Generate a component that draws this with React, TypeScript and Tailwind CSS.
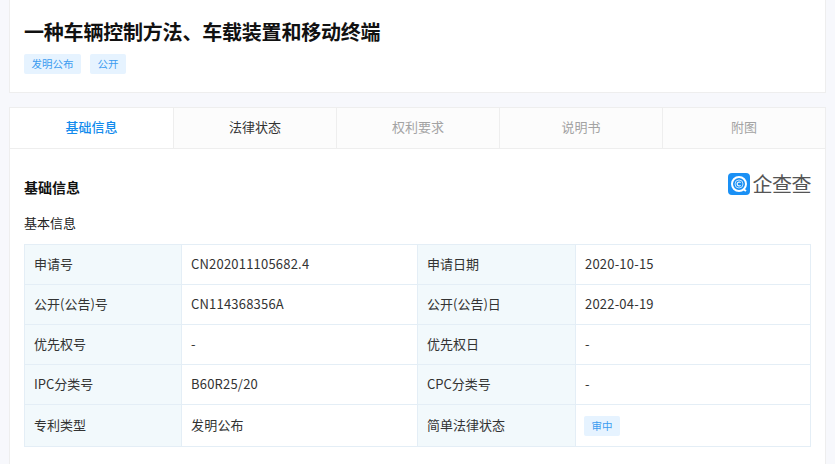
const font = "font-['Microsoft_YaHei','Noto_Sans_CJK_SC',sans-serif]"

const tabs = ['基础信息', '法律状态', '权利要求', '说明书', '附图']

const rows = [
  ['申请号', 'CN202011105682.4', '申请日期', '2020-10-15'],
  ['公开(公告)号', 'CN114368356A', '公开(公告)日', '2022-04-19'],
  ['优先权号', '-', '优先权日', '-'],
  ['IPC分类号', 'B60R25/20', 'CPC分类号', '-'],
  ['专利类型', '发明公布', '简单法律状态', ''],
]

function Tag({ text }: { text: string }) {
  return (
    <span className="flex h-5 items-center rounded-[2px] bg-[#e6f3ff] px-[7.5px] text-[10.5px] text-[#3c9cf0]">
      {text}
    </span>
  )
}

function Logo() {
  return (
    <div className="flex items-center gap-[3px]">
      <div className="flex size-[22px] items-center justify-center rounded-[4px] bg-[#1a90f5]">
        <svg width="20" height="20" viewBox="0 0 20 20" fill="none" stroke="#fff">
          <circle cx="10" cy="10" r="7" strokeWidth="2" />
          <circle cx="10" cy="10" r="4" stroke="#bfe0fb" strokeWidth="1" />
          <path d="M11.6 8.6a2 2 0 1 0 0 2.8" strokeWidth="1.1" />
          <path d="M14 15l3 2" strokeWidth="2" />
        </svg>
      </div>
      <span className="text-[20px] leading-[22px] font-normal tracking-[-0.5px] text-[#555]">企查查</span>
    </div>
  )
}

export default function App() {
  return (
    <div className={`${font} h-[464px] w-[835px] overflow-hidden bg-[#f7f8fc] px-[9px]`}>
      <div className="h-[93px] border-x border-b border-[#eeeeee] bg-white px-[14px] pt-[18px]">
        <h1 className="text-[20px] leading-7 font-bold tracking-[-0.2px] text-[#111]">一种车辆控制方法、车载装置和移动终端</h1>
        <div className="mt-[8px] flex gap-[9px]">
          <Tag text="发明公布" />
          <Tag text="公开" />
        </div>
      </div>

      <div className="mt-[14px] h-[400px] border border-[#eeeeee] bg-white">
        <div className="grid h-[41px] grid-cols-[164px_163px_163px_163px_1fr] border-b border-[#eeeeee]">
          {tabs.map((t, i) => (
            <div
              key={t}
              className={`flex items-center justify-center border-r border-[#eeeeee] pb-[2px] text-[13px] last:border-r-0 ${
                i === 0
                  ? 'bg-white font-medium text-[#128bed]'
                  : i === 1
                    ? 'bg-[#fcfcfc] text-[#333]'
                    : 'bg-[#fcfcfc] text-[#a3a3a3]'
              }`}
            >
              {t}
            </div>
          ))}
        </div>

        <div className="px-[14px]">
          <div className="flex h-[54px] items-center justify-between pt-[22px]">
            <h2 className="text-[14px] font-bold text-[#111]">基础信息</h2>
            <div className="-mt-[6px]">
              <Logo />
            </div>
          </div>
          <h3 className="mt-[2px] mb-[3px] text-[13px] leading-[36px] text-[#222]">基本信息</h3>
          <div className="w-[787px] border border-b-0 border-[#e4eef6]">
            {rows.map((r, i) => (
              <div
                key={i}
                className="grid h-[40px] grid-cols-[157px_236px_158px_1fr] border-b border-[#e4eef6] text-[13px] text-[#333] last:h-[42px]"
              >
                <div className="flex items-center border-r border-[#e4eef6] bg-[#f2f9fc] pb-[2px] pl-[9px]">{r[0]}</div>
                <div className="flex items-center border-r border-[#e4eef6] pb-[2px] pl-[9px] tracking-[0.2px]">{r[1]}</div>
                <div className="flex items-center border-r border-[#e4eef6] bg-[#f2f9fc] pb-[2px] pl-[9px]">{r[2]}</div>
                <div className="flex items-center pb-[2px] pl-[9px] tracking-[0.2px]">
                  {r[3] ? (
                    r[3]
                  ) : (
                    <div className="mt-[2px] -ml-px tracking-normal">
                      <Tag text="审中" />
                    </div>
                  )}
                </div>
              </div>
            ))}
          </div>
        </div>
      </div>
    </div>
  )
}
